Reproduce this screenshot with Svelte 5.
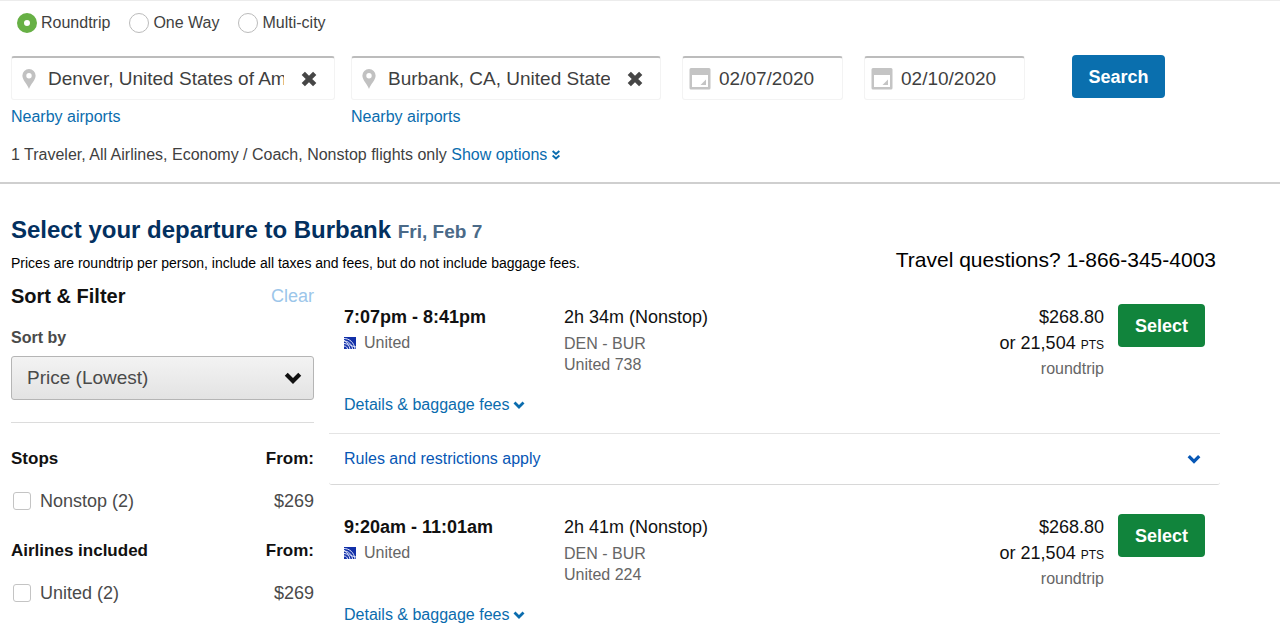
<script lang="ts">
  let tripType = "roundtrip"
  let origin = "Denver, United States of America"
  let destination = "Burbank, CA, United States of America"
  let departDate = "02/07/2020"
  let returnDate = "02/10/2020"
  let sortBy = "price"

  const tripTypes = [
    { value: "roundtrip", label: "Roundtrip" },
    { value: "oneway", label: "One Way" },
    { value: "multi", label: "Multi-city" },
  ]

  const filters = [
    { title: "Stops", option: "Nonstop (2)", price: "$269" },
    { title: "Airlines included", option: "United (2)", price: "$269" },
  ]

  const flights = [
    { time: "7:07pm - 8:41pm", duration: "2h 34m (Nonstop)", number: "United 738", rules: true },
    { time: "9:20am - 11:01am", duration: "2h 41m (Nonstop)", number: "United 224", rules: false },
  ]
</script>

{#snippet pin()}
  <svg class="pin" width="14" height="20" viewBox="0 0 14 20" aria-hidden="true">
    <path fill="#c1c1c1" fill-rule="evenodd" d="M7 0a6.6 6.6 0 0 0-6.6 6.7C.4 11 5 14.500 7 20c2-5.500 6.600-9 6.600-13.300A6.600 6.600 0 0 0 7 0zm0 4a2.700 2.700 0 1 1 0 5.400A2.700 2.700 0 0 1 7 4z" />
  </svg>
{/snippet}

{#snippet calendar()}
  <svg class="calendar" width="22" height="22" viewBox="0 0 22 22" aria-hidden="true">
    <path fill="#c4c4c4" fill-rule="evenodd" d="M2 0h18a1.500 1.500 0 0 1 1.500 1.500v18.500a1.500 1.500 0 0 1-1.500 1.500H2A1.500 1.500 0 0 1 .5 20V1.500A1.500 1.500 0 0 1 2 0zm1 7v12h16V7z" />
    <path fill="#c4c4c4" d="M17 11.500V17h-5.500z" />
  </svg>
{/snippet}

{#snippet cross()}
  <svg width="16" height="16" viewBox="0 0 16 16" aria-hidden="true">
    <path fill="none" stroke="#464646" stroke-width="4.600" d="M2.300 2.300l11.400 11.400M13.700 2.300L2.300 13.700" />
  </svg>
{/snippet}

{#snippet chevron(size)}
  <svg width={size} height={size} viewBox="0 0 12 12" aria-hidden="true">
    <path fill="none" stroke="currentColor" stroke-width="2.800" d="M1.500 3.500L6 8l4.500-4.500" />
  </svg>
{/snippet}

<form class="search" on:submit|preventDefault>
  <div class="trip-types">
    {#each tripTypes as type}
      <label>
        <input type="radio" name="trip" value={type.value} bind:group={tripType} />
        {type.label}
      </label>
    {/each}
  </div>

  <div class="fields">
    <div class="place from">
      <div class="box">
        {@render pin()}
        <input type="text" aria-label="From" bind:value={origin} />
        <button type="button" class="clear" aria-label="Clear origin" on:click={() => (origin = "")}>
          {@render cross()}
        </button>
      </div>
      <a href="#nearby-origin">Nearby airports</a>
    </div>
    <div class="place to">
      <div class="box">
        {@render pin()}
        <input type="text" aria-label="To" bind:value={destination} />
        <button type="button" class="clear" aria-label="Clear destination" on:click={() => (destination = "")}>
          {@render cross()}
        </button>
      </div>
      <a href="#nearby-destination">Nearby airports</a>
    </div>
    <div class="box date">
      {@render calendar()}
      <input type="text" aria-label="Departure date" bind:value={departDate} />
    </div>
    <div class="box date">
      {@render calendar()}
      <input type="text" aria-label="Return date" bind:value={returnDate} />
    </div>
    <button class="primary submit">Search</button>
  </div>

  <p class="summary">
    1 Traveler, All Airlines, Economy / Coach, Nonstop flights only
    <a href="#options">Show options
      <svg width="8" height="10" viewBox="0 0 8 10" aria-hidden="true">
        <path fill="none" stroke="currentColor" stroke-width="2" d="M.6 1L4 4l3.400-3M.6 5.500L4 8.500l3.400-3" />
      </svg>
    </a>
  </p>
</form>

<main>
  <header>
    <div>
      <h1>Select your departure to Burbank <small>Fri, Feb 7</small></h1>
      <p class="note">Prices are roundtrip per person, include all taxes and fees, but do not include baggage fees.</p>
    </div>
    <p class="questions">Travel questions? 1-866-345-4003</p>
  </header>

  <div class="columns">
    <aside>
      <div class="row">
        <h2>Sort &amp; Filter</h2>
        <button type="button" class="reset">Clear</button>
      </div>
      <label class="sort-label" for="sort">Sort by</label>
      <div class="select">
        <select id="sort" bind:value={sortBy}>
          <option value="price">Price (Lowest)</option>
          <option value="duration">Duration (Shortest)</option>
        </select>
        <span class="arrow">{@render chevron(18)}</span>
      </div>
      {#each filters as filter}
        <section>
          <h3 class="row"><span>{filter.title}</span><span>From:</span></h3>
          <div class="row option">
            <label><input type="checkbox" />{filter.option}</label>
            <span>{filter.price}</span>
          </div>
        </section>
      {/each}
    </aside>

    <div class="flights">
      {#each flights as flight}
        <article>
          <div class="flight">
            <div class="times">
              <h3>{flight.time}</h3>
              <p class="airline">
                <svg width="12" height="12" viewBox="0 0 12 12" aria-hidden="true">
                  <path fill="#1230a8" d="M0 0h12v12H0z" />
                  <path fill="none" stroke="#dfe5fa" d="M0 1.500C5 1.500 10 5 11 12M0 4c4 0 8 3 8.500 8M0 6.500c3 0 5.500 2 6 5.500M0 9c2 0 3.500 1.500 3.500 3M0 3c3 4 7 6 12 7" />
                </svg>
                United
              </p>
            </div>
            <div class="route">
              <p class="main">{flight.duration}</p>
              <p>DEN - BUR</p>
              <p>{flight.number}</p>
            </div>
            <div class="price">
              <p class="main">$268.80</p>
              <p class="main">or 21,504 <small>PTS</small></p>
              <p>roundtrip</p>
            </div>
            <button type="button" class="primary choose">Select</button>
          </div>
          <button type="button" class="details">Details &amp; baggage fees {@render chevron(12)}</button>
          {#if flight.rules}
            <button type="button" class="rules">Rules and restrictions apply {@render chevron(14)}</button>
          {/if}
        </article>
      {/each}
    </div>
  </div>
</main>

<style>
  :global(body) {
    background: #fff;
    color: #000;
    font-family: "Liberation Sans", Arial, sans-serif;
    font-size: 16px;
    line-height: 20px;
  }

  h1, h2, h3, p {
    margin: 0;
  }

  input, select, button {
    font: inherit;
    color: inherit;
    margin: 0;
  }

  button {
    background: none;
    border: none;
    padding: 0;
    cursor: pointer;
  }

  svg {
    flex: none;
  }

  a {
    color: #0a6cae;
    text-decoration: none;
  }

  .search {
    border-top: 1px solid #ececec;
    border-bottom: 2px solid #cfcfcf;
    padding: 12px 12px 17px 11px;
    color: #3f3f3f;
  }

  .trip-types {
    display: flex;
    gap: 19px;
    padding-left: 6px;
  }

  .trip-types label {
    display: flex;
    align-items: center;
    gap: 4px;
  }

  input[type="radio"] {
    appearance: none;
    box-sizing: border-box;
    width: 20px;
    height: 20px;
    border: 1px solid #bbb;
    border-radius: 50%;
  }

  input[type="radio"]:checked {
    border: 7px solid #67b045;
  }

  .fields {
    display: flex;
    align-items: flex-start;
    margin-top: 22px;
  }

  .place a {
    display: inline-block;
    margin-top: 7px;
  }

  .from {
    width: 324px;
    margin-right: 16px;
  }

  .to {
    width: 310px;
    margin-right: 21px;
  }

  .box {
    display: flex;
    align-items: center;
    box-sizing: border-box;
    height: 44px;
    margin-top: 1px;
    border: 1px solid #f3f3f3;
    border-top: 2px solid #bcbcbc;
    border-radius: 3px;
  }

  .box input {
    flex: 1;
    min-width: 0;
    padding: 0;
    border: none;
    outline: none;
    background: none;
    font-size: 19px;
    line-height: 24px;
  }

  .pin {
    margin: 0 12px 0 10px;
  }

  .clear {
    display: flex;
    margin: 0 17px;
  }

  .date {
    width: 161px;
    margin-right: 21px;
  }

  .calendar {
    margin: 0 8px 0 6px;
  }

  .primary {
    border-radius: 4px;
    color: #fff;
    font-size: 18px;
    font-weight: bold;
    height: 43px;
  }

  .submit {
    width: 93px;
    margin-left: 26px;
    background: #0a6fae;
  }

  .summary {
    margin-top: 18px;
  }

  main {
    padding: 31px 60px 0 11px;
  }

  header {
    display: flex;
    justify-content: space-between;
    align-items: flex-end;
  }

  h1 {
    color: #03305f;
    font-size: 24px;
    line-height: 30px;
  }

  h1 small {
    color: #4b6a88;
    font-size: 19px;
  }

  .note {
    font-size: 14px;
    margin-top: 6px;
  }

  .questions {
    font-size: 21px;
    line-height: 26px;
    padding-right: 4px;
  }

  .columns {
    display: flex;
    gap: 15px;
    margin-top: 11px;
  }

  aside {
    width: 303px;
    flex: none;
    color: #4a4a4a;
    font-size: 18px;
  }

  .row {
    display: flex;
    justify-content: space-between;
    align-items: center;
  }

  h2 {
    color: #111;
    font-size: 20px;
    line-height: 24px;
  }

  .reset {
    color: #9cc6ea;
  }

  .sort-label {
    display: block;
    margin-top: 20px;
    font-size: 16px;
    font-weight: bold;
  }

  .select {
    position: relative;
    margin-top: 8px;
    padding-bottom: 22px;
    border-bottom: 1px solid #dcdcdc;
  }

  select {
    display: block;
    appearance: none;
    width: 100%;
    height: 44px;
    padding: 0 40px 0 15px;
    border: 1px solid #b5b5b5;
    border-radius: 3px;
    background: linear-gradient(#f3f3f3, #e3e3e3);
    font-size: 19px;
  }

  .arrow {
    position: absolute;
    top: 13px;
    right: 12px;
    display: flex;
    color: #111;
    pointer-events: none;
  }

  aside section {
    padding-top: 24px;
  }

  aside section + section {
    padding-top: 27px;
  }

  aside h3 {
    color: #111;
    font-size: 17px;
    line-height: 24px;
  }

  .option {
    margin-top: 19px;
  }

  .option label {
    display: flex;
    align-items: center;
    gap: 9px;
    line-height: 22px;
  }

  input[type="checkbox"] {
    appearance: none;
    box-sizing: border-box;
    width: 18px;
    height: 18px;
    margin-left: 2px;
    border: 1px solid #c4c4c4;
    border-radius: 3px;
  }

  .flights {
    flex: 1;
    min-width: 0;
    color: #666;
  }

  article {
    margin-bottom: 9px;
  }

  .flight {
    display: flex;
    align-items: flex-start;
    padding: 20px 15px 0;
  }

  .times {
    width: 220px;
  }

  .times h3, .main {
    color: #111;
    font-size: 18px;
    line-height: 26px;
  }

  .route {
    line-height: 21px;
  }

  .airline {
    display: flex;
    align-items: center;
    gap: 8px;
    line-height: 26px;
  }

  .route .main {
    margin-bottom: 3px;
  }

  .price {
    flex: 1;
    text-align: right;
    line-height: 26px;
  }

  .price small {
    font-size: 12px;
    line-height: 12px;
  }

  .choose {
    width: 87px;
    margin-left: 14px;
    background: #11843c;
  }

  .details {
    display: flex;
    align-items: center;
    gap: 4px;
    margin: 13px 15px 18px;
    color: #0a6cae;
  }

  .rules {
    display: flex;
    align-items: center;
    justify-content: space-between;
    width: 100%;
    height: 52px;
    padding: 0 19px 0 15px;
    border-top: 1px solid #e4e4e4;
    border-bottom: 1px solid #d8d8d8;
    border-radius: 0 0 3px 3px;
    color: #0757b5;
  }
</style>
